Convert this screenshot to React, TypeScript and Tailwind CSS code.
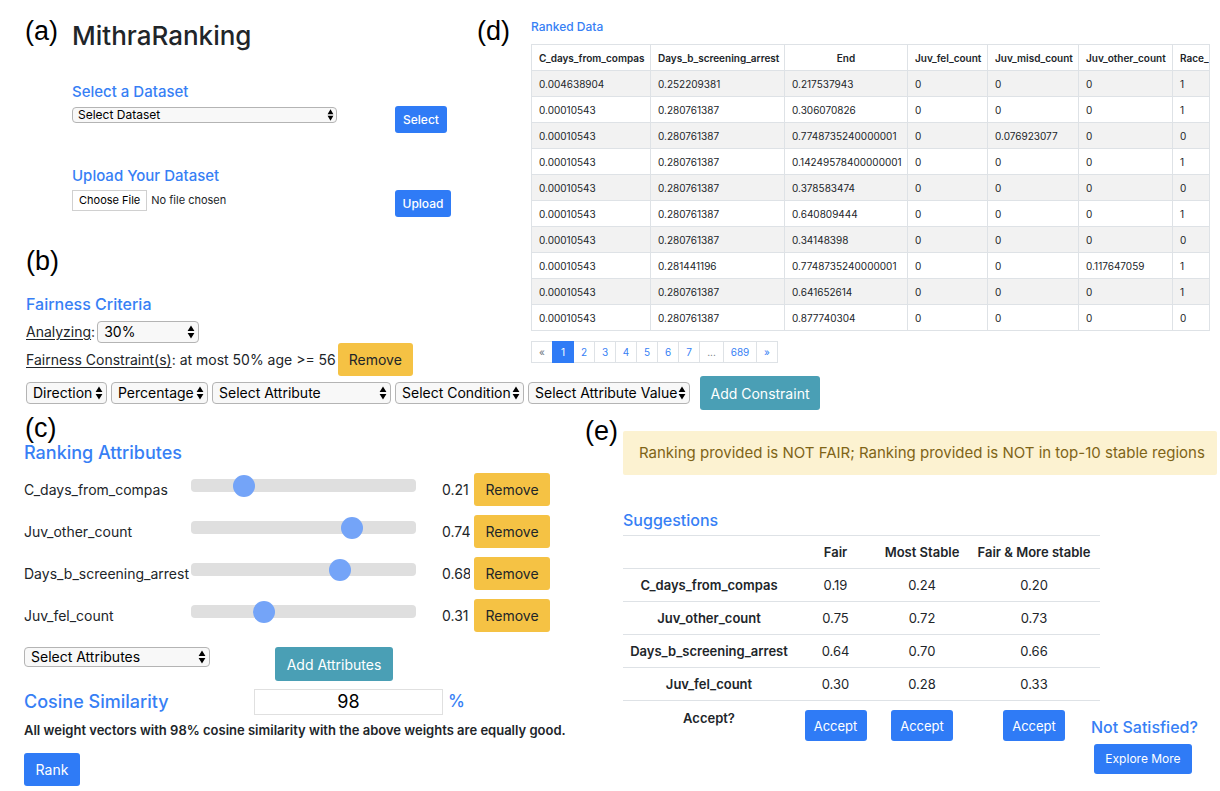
import type { ReactNode } from "react";

const HEADING = "font-medium text-[#377ff5]";
const BTN = "shrink-0 rounded-[3px] text-center";
const BLUE = "bg-[#2f7bf6] text-white";

function Tag({ children }: { children: ReactNode }) {
  return (
    <span className="shrink-0 font-['Liberation_Sans',sans-serif] text-[27px] leading-7 text-black">
      {children}
    </span>
  );
}

function Arrows({ small }: { small?: boolean }) {
  return (
    <svg
      viewBox="0 0 8 14"
      className={`pointer-events-none absolute top-1/2 -translate-y-1/2 ${
        small ? "right-[3px] h-[12px] w-[7px]" : "right-[4px] h-[14px] w-[8px]"
      }`}
      aria-hidden="true"
    >
      <path d="M4 0.4 7.4 6H0.6Z M4 13.6 0.6 8H7.4Z" fill="#000" />
    </svg>
  );
}

function Picker({
  label,
  width,
  size = "h-[22px] text-[14px] leading-5 pl-[6px]",
  small,
}: {
  label: string;
  width: string;
  size?: string;
  small?: boolean;
}) {
  return (
    <span className={`relative flex shrink-0 ${width}`}>
      <select
        aria-label={label}
        className={`w-full appearance-none rounded-[4px] border border-[#b4b4b4] bg-[#f8f8f8] text-black ${size}`}
      >
        <option>{label}</option>
      </select>
      <Arrows small={small} />
    </span>
  );
}

function DatasetPanel() {
  return (
    <section className="flex pl-[25px]">
      <span className="w-[47px] pt-px">
        <Tag>(a)</Tag>
      </span>
      <div className="flex-1">
        <h1 className="text-[26px] font-medium leading-10 text-[#212529]">MithraRanking</h1>
        <form className="mt-[26px] text-[12px]">
          <h2 className={`mb-1 text-[15px] leading-5 ${HEADING}`}>Select a Dataset</h2>
          <div className="flex items-start justify-between pr-[26px]">
            <Picker
              label="Select Dataset"
              width="w-[265px] mt-px"
              size="h-[16px] text-[12px] leading-[14px] pl-[5px]"
              small
            />
            <span className="w-14">
              <button type="button" className={`h-[27px] w-[52px] ${BTN} ${BLUE} font-medium`}>
                Select
              </button>
            </span>
          </div>
          <h2 className={`mb-1 mt-[33px] text-[15px] leading-5 ${HEADING}`}>
            <label htmlFor="file">Upload Your Dataset</label>
          </h2>
          <div className="flex items-start justify-between pr-[26px]">
            <input
              id="file"
              type="file"
              className="w-[265px] text-[11px] text-[#212529] file:mr-1 file:h-[21px] file:border file:border-solid file:border-[#d0d0d0] file:bg-white file:px-[6px] file:text-[11px] file:text-black"
            />
            <button type="button" className={`h-[27px] w-14 ${BTN} ${BLUE} font-medium`}>
              Upload
            </button>
          </div>
        </form>
      </div>
    </section>
  );
}

function FairnessPanel() {
  return (
    <section className="mt-7 pl-[26px] text-[14px] text-[#212529]">
      <div className="flex h-8 items-center">
        <Tag>(b)</Tag>
      </div>
      <h2 className={`mt-[15px] text-[16px] leading-6 ${HEADING}`}>Fairness Criteria</h2>
      <div className="mt-[5px] flex items-center gap-[2px]">
        <span className="leading-[22px]">
          <u className="underline-offset-2">Analyzing</u>:
        </span>
        <Picker label="30%" width="w-[102px]" />
      </div>
      <div className="flex items-center gap-[2px]">
        <span className="leading-5">
          <u className="underline-offset-2">Fairness Constraint(s)</u>: at most 50% age &gt;= 56
        </span>
        <button type="button" className={`h-[33px] w-[75px] ${BTN} bg-[#f5c244]`}>
          Remove
        </button>
      </div>
    </section>
  );
}

function ConstraintBar() {
  return (
    <div className="flex items-center gap-1 pl-[26px] text-[14px]">
      <Picker label="Direction" width="w-[81px]" />
      <Picker label="Percentage" width="w-[97px]" />
      <Picker label="Select Attribute" width="w-[179px]" />
      <Picker label="Select Condition" width="w-[129px]" />
      <Picker label="Select Attribute Value" width="w-[162px]" />
      <button type="button" className={`ml-[6px] h-[34px] w-[120px] ${BTN} bg-[#4a9fb5] text-white`}>
        Add Constraint
      </button>
    </div>
  );
}

const COLUMNS = [
  { name: "C_days_from_compas", width: "w-[119px]" },
  { name: "Days_b_screening_arrest", width: "w-[134px]" },
  { name: "End", width: "w-[123px]" },
  { name: "Juv_fel_count", width: "w-[80px]" },
  { name: "Juv_misd_count", width: "w-[91px]" },
  { name: "Juv_other_count", width: "w-[94px]" },
  { name: "Race_", width: "w-auto" },
];

const RANKED = [
  ["0.004638904", "0.252209381", "0.217537943", "0", "0", "0", "1"],
  ["0.00010543", "0.280761387", "0.306070826", "0", "0", "0", "1"],
  ["0.00010543", "0.280761387", "0.7748735240000001", "0", "0.076923077", "0", "0"],
  ["0.00010543", "0.280761387", "0.14249578400000001", "0", "0", "0", "1"],
  ["0.00010543", "0.280761387", "0.378583474", "0", "0", "0", "0"],
  ["0.00010543", "0.280761387", "0.640809444", "0", "0", "0", "1"],
  ["0.00010543", "0.280761387", "0.34148398", "0", "0", "0", "0"],
  ["0.00010543", "0.281441196", "0.7748735240000001", "0", "0", "0.117647059", "1"],
  ["0.00010543", "0.280761387", "0.641652614", "0", "0", "0", "1"],
  ["0.00010543", "0.280761387", "0.877740304", "0", "0", "0", "0"],
];

const PAGES = [
  { text: "«", style: "w-[22px] border-[#dee2e6] text-[#6c757d]" },
  { text: "1", style: "relative w-[22px] border-[#2f7bf6] bg-[#2f7bf6] text-white" },
  { text: "2", style: "w-[22px] border-[#dee2e6] text-[#377ff5]" },
  { text: "3", style: "w-[22px] border-[#dee2e6] text-[#377ff5]" },
  { text: "4", style: "w-[22px] border-[#dee2e6] text-[#377ff5]" },
  { text: "5", style: "w-[22px] border-[#dee2e6] text-[#377ff5]" },
  { text: "6", style: "w-[22px] border-[#dee2e6] text-[#377ff5]" },
  { text: "7", style: "w-[22px] border-[#dee2e6] text-[#377ff5]" },
  { text: "...", style: "w-[25px] border-[#dee2e6] text-[#6c757d]" },
  { text: "689", style: "w-[34px] border-[#dee2e6] text-[#377ff5]" },
  { text: "»", style: "w-[22px] border-[#dee2e6] text-[#377ff5]" },
];

function RankedPanel() {
  return (
    <section className="flex">
      <span className="w-[54px] shrink-0 pt-px">
        <Tag>(d)</Tag>
      </span>
      <div className="min-w-0 flex-1 pr-[10px] pt-px">
        <h2 className={`text-[12px] leading-5 ${HEADING}`}>Ranked Data</h2>
        <table className="mt-[7px] w-full table-fixed border-collapse border border-[#dee2e6] text-[10px] leading-4 text-[#212529]">
          <thead>
            <tr className="h-[26px]">
              {COLUMNS.map((c) => (
                <th
                  key={c.name}
                  className={`overflow-hidden whitespace-nowrap border border-[#dee2e6] px-[7px] font-semibold ${c.width}`}
                >
                  {c.name}
                </th>
              ))}
            </tr>
          </thead>
          <tbody>
            {RANKED.map((row, i) => (
              <tr key={i} className="h-[26px] odd:bg-[#f2f2f2]">
                {row.map((v, j) => (
                  <td key={j} className="border border-[#dee2e6] px-[7px]">
                    {v}
                  </td>
                ))}
              </tr>
            ))}
          </tbody>
        </table>
        <nav aria-label="Pages" className="mt-[10px] flex text-[10px] leading-5">
          {PAGES.map((p) => (
            <a key={p.text} href="#page" className={`-mr-px border text-center ${p.style}`}>
              {p.text}
            </a>
          ))}
        </nav>
      </div>
    </section>
  );
}

const WEIGHTS = [
  { name: "C_days_from_compas", value: 0.206 },
  { name: "Juv_other_count", value: 0.74 },
  { name: "Days_b_screening_arrest", value: 0.68 },
  { name: "Juv_fel_count", value: 0.306 },
];

function AttributesPanel() {
  return (
    <section className="pl-6 pt-1 text-[14px] text-[#212529]">
      <div className="flex pl-px">
        <Tag>(c)</Tag>
      </div>
      <h2 className={`text-[18px] leading-[22px] ${HEADING}`}>Ranking Attributes</h2>
      <ul className="mt-[9px] flex flex-col gap-[9px]">
        {WEIGHTS.map((w) => (
          <li key={w.name} className="flex h-[33px] items-center">
            <label htmlFor={w.name} className="w-[167px] whitespace-nowrap">
              {w.name}
            </label>
            <input
              id={w.name}
              type="range"
              min={0}
              max={1}
              step="any"
              defaultValue={w.value}
              className="mb-2 h-[13px] w-[225px] appearance-none rounded-[4px] bg-[#dfdfdf] [&::-webkit-slider-thumb]:size-[22px] [&::-webkit-slider-thumb]:appearance-none [&::-webkit-slider-thumb]:rounded-full [&::-webkit-slider-thumb]:bg-[#74a4f8]"
            />
            <output htmlFor={w.name} className="ml-[26px] w-7 overflow-hidden">
              {w.value.toFixed(2)}
            </output>
            <button type="button" className={`ml-1 h-[33px] w-[76px] ${BTN} bg-[#f5c244]`}>
              Remove
            </button>
          </li>
        ))}
      </ul>
      <div className="mt-[15px] flex items-start gap-[65px]">
        <Picker label="Select Attributes" width="w-[186px]" size="h-[20px] text-[14px] leading-[18px] pl-[6px]" />
        <button type="button" className={`h-[34px] w-[118px] ${BTN} bg-[#4a9fb5] text-white`}>
          Add Attributes
        </button>
      </div>
      <div className={`mt-[7px] flex items-center text-[18px] ${HEADING}`}>
        <label htmlFor="cosine" className="w-[230px]">
          Cosine Similarity
        </label>
        <input
          id="cosine"
          defaultValue="98"
          className="h-[26px] w-[189px] border border-[#e0e0e0] text-center text-[18px] font-normal text-black"
        />
        <span className="ml-[5px] text-[17px]">%</span>
      </div>
      <p className="mt-[5px] text-[13px] font-semibold leading-5">
        All weight vectors with 98% cosine similarity with the above weights are equally good.
      </p>
      <button type="button" className={`mt-[13px] h-[33px] w-14 ${BTN} ${BLUE}`}>
        Rank
      </button>
    </section>
  );
}

const SUGGESTIONS = [
  ["C_days_from_compas", "0.19", "0.24", "0.20"],
  ["Juv_other_count", "0.75", "0.72", "0.73"],
  ["Days_b_screening_arrest", "0.64", "0.70", "0.66"],
  ["Juv_fel_count", "0.30", "0.28", "0.33"],
];

function SuggestionsPanel() {
  return (
    <section className="flex items-start pr-[3px] pt-[7px]">
      <span className="w-[38px] shrink-0">
        <Tag>(e)</Tag>
      </span>
      <div className="min-w-0 flex-1 pt-[14px]">
        <p
          role="alert"
          className="whitespace-nowrap rounded-[2px] bg-[#fcf2d1] px-4 text-[15px] leading-[44px] text-[#7f6417]"
        >
          Ranking provided is NOT FAIR; Ranking provided is NOT in top-10 stable regions
        </p>
        <h2 className={`mb-[5px] mt-[35px] text-[16px] leading-5 ${HEADING}`}>Suggestions</h2>
        <div className="flex items-end">
          <table className="w-[477px] shrink-0 table-fixed self-start border-collapse text-center text-[13px] leading-5 text-[#212529]">
            <thead>
              <tr className="h-[33px] border-y border-[#dee2e6]">
                <td className="w-[172px]" />
                <th className="w-[81px] font-semibold">Fair</th>
                <th className="w-[92px] whitespace-nowrap font-semibold">Most Stable</th>
                <th className="whitespace-nowrap font-semibold">Fair &amp; More stable</th>
              </tr>
            </thead>
            <tbody>
              {SUGGESTIONS.map(([name, ...vals]) => (
                <tr key={name} className="h-[33px] border-b border-[#dee2e6]">
                  <th className="font-semibold">{name}</th>
                  {vals.map((v, i) => (
                    <td key={i}>{v}</td>
                  ))}
                </tr>
              ))}
              <tr className="align-top">
                <th className="pt-[7px] font-semibold">Accept?</th>
                {["Fair", "Most Stable", "Fair & More stable"].map((k) => (
                  <td key={k} className="pt-[9px]">
                    <button type="button" aria-label={`Accept ${k}`} className={`h-[31px] w-[62px] ${BTN} ${BLUE}`}>
                      Accept
                    </button>
                  </td>
                ))}
              </tr>
            </tbody>
          </table>
          <div className="-ml-[9px] mt-[182px]">
            <h2 className={`whitespace-nowrap text-[16px] leading-5 ${HEADING}`}>Not Satisfied?</h2>
            <button type="button" className={`ml-[3px] mt-[7px] h-[30px] w-[98px] ${BTN} ${BLUE} text-[12px]`}>
              Explore More
            </button>
          </div>
        </div>
      </div>
    </section>
  );
}

export default function App() {
  return (
    <main className="min-h-screen bg-white font-['Inter',sans-serif]">
      <div className="grid grid-cols-[477px_minmax(0,1fr)] pt-4">
        <div>
          <DatasetPanel />
          <FairnessPanel />
        </div>
        <RankedPanel />
      </div>
      <ConstraintBar />
      <div className="grid grid-cols-[585px_minmax(0,1fr)]">
        <AttributesPanel />
        <SuggestionsPanel />
      </div>
    </main>
  );
}
